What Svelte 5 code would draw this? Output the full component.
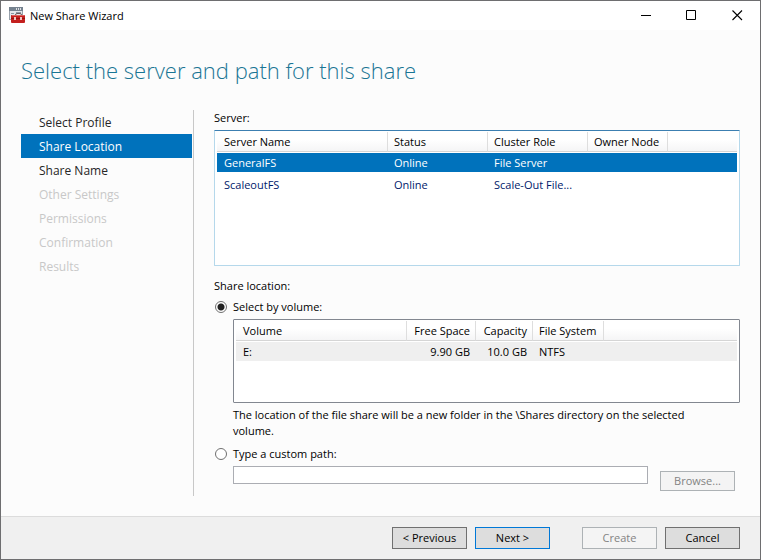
<script>
  const steps = [
    { name: 'Select Profile' },
    { name: 'Share Location', current: true },
    { name: 'Share Name' },
    { name: 'Other Settings', off: true },
    { name: 'Permissions', off: true },
    { name: 'Confirmation', off: true },
    { name: 'Results', off: true }
  ];
  const servers = [
    { name: 'GeneralFS', status: 'Online', role: 'File Server', node: '' },
    { name: 'ScaleoutFS', status: 'Online', role: 'Scale-Out File...', node: '' }
  ];
  let selected = $state('GeneralFS');
  let mode = $state('volume');
  let path = $state('');
</script>

<div class="window">
  <header class="titlebar">
    <svg class="logo" width="17" height="17" viewBox="0 0 17 17" aria-hidden="true">
      <rect x="0.500" y="0.500" width="13" height="12" fill="#e3e7eb" stroke="#97a1ab" />
      <rect x="0" y="0" width="14" height="4" fill="#75828f" />
      <path d="M7 2h1M9 2h1M11 2h1" stroke="#fff" stroke-width="1.500" />
      <path d="M2 6.500h3M2 8.500h1M7 5.500h5" stroke="#8b98a5" />
      <path d="M6.500 8.500V8q0-1.500 1.500-1.500h3q1.500 0 1.500 1.500v0.500" fill="none" stroke="#6a5a5c" />
      <rect x="2" y="8" width="14" height="8" rx="1" fill="#c4201f" />
      <path d="M3 8.500h12" stroke="#e0605c" />
      <path d="M2 11.500h14" stroke="#96120f" />
      <path d="M5 10h2v3H5zM11 10h2v3h-2z" fill="#efc4c1" />
    </svg>
    <span class="caption">New Share Wizard</span>
    <button class="sys" aria-label="Minimize"><svg width="11" height="11" viewBox="0 0 11 11"><path d="M1 5.500h10" stroke="#000" /></svg></button>
    <button class="sys" aria-label="Maximize"><svg width="11" height="11" viewBox="0 0 11 11"><path d="M0.500 0.500h9v9h-9z" fill="none" stroke="#000" /></svg></button>
    <button class="sys" aria-label="Close"><svg width="11" height="11" viewBox="0 0 11 11"><path d="M0.500 0.500l9.500 9.500M10 0.500l-9.500 9.500" stroke="#000" stroke-width="1.100" /></svg></button>
  </header>

  <h1>Select the server and path for this share</h1>

  <div class="body">
    <nav aria-label="Wizard steps">
      {#each steps as s}
        <button class="step" class:current={s.current} disabled={s.off}>{s.name}</button>
      {/each}
    </nav>

    <main>
      <div class="label">Server:</div>
      <div class="grid servers">
        <table aria-label="Server">
          <colgroup><col class="c171" /><col class="c100" /><col class="c100" /><col class="c80" /><col /></colgroup>
          <thead>
            <tr><th>Server Name</th><th>Status</th><th>Cluster Role</th><th>Owner Node</th><td class="rest"></td></tr>
          </thead>
          <tbody>
            {#each servers as s}
              <tr class:selected={selected === s.name} onclick={() => (selected = s.name)}>
                <td>{s.name}</td><td>{s.status}</td><td>{s.role}</td><td>{s.node}</td><td></td>
              </tr>
            {/each}
          </tbody>
        </table>
      </div>

      <div class="label location">Share location:</div>
      <label class="option"><input type="radio" value="volume" bind:group={mode} />Select by volume:</label>
      <div class="indent">
        <div class="grid volumes">
          <table aria-label="Volume">
            <colgroup><col class="c171" /><col class="c69" /><col class="c57" /><col class="c71" /><col /></colgroup>
            <thead>
              <tr><th>Volume</th><th class="num">Free Space</th><th class="num">Capacity</th><th>File System</th><td class="rest"></td></tr>
            </thead>
            <tbody>
              <tr class="inactive"><td>E:</td><td class="num">9.90 GB</td><td class="num">10.0 GB</td><td>NTFS</td><td></td></tr>
            </tbody>
          </table>
        </div>
        <p>The location of the file share will be a new folder in the \Shares directory on the selected volume.</p>
      </div>
      <label class="option custom"><input type="radio" value="path" bind:group={mode} />Type a custom path:</label>
      <div class="indent path">
        <input type="text" aria-label="Custom path" bind:value={path} />
        <button class="btn browse" disabled>Browse...</button>
      </div>
    </main>
  </div>

  <footer>
    <button class="btn">&lt; Previous</button>
    <button class="btn primary">Next &gt;</button>
    <button class="btn create" disabled>Create</button>
    <button class="btn">Cancel</button>
  </footer>
</div>

<style>
  .window {
    box-sizing: border-box;
    min-height: 100vh;
    display: flex;
    flex-direction: column;
    border: 1px solid #6e6e70;
    background: #fcfcfc;
    color: #000;
    font: 11px/16px "Open Sans", "Noto Sans", sans-serif;
  }
  button, input { font: inherit; color: inherit; margin: 0; }
  .titlebar {
    display: flex;
    align-items: center;
    height: 29px;
    padding-left: 8px;
    background: #fff;
  }
  .caption { flex: 1; padding-left: 4px; }
  .sys {
    display: grid;
    place-items: center;
    width: 46px;
    height: 29px;
    padding: 0;
    border: 0;
    background: none;
  }
  h1 {
    margin: 24px 20px 0;
    font-size: 22px;
    line-height: 32px;
    font-weight: 300;
    color: #1a7594;
  }
  .body {
    flex: 1;
    display: flex;
    margin: 24px 20px 20px;
  }
  nav {
    display: flex;
    flex-direction: column;
    width: 171px;
    padding-right: 1px;
    border-right: 1px solid #c8c8c8;
    font-size: 12px;
  }
  .step {
    height: 24px;
    padding: 2px 18px 0;
    border: 0;
    background: none;
    text-align: left;
    color: #262626;
  }
  .step.current { background: #0072bc; color: #fff; }
  .step:disabled { color: #c8c8c8; }
  main { flex: 1; min-width: 0; padding-left: 20px; }
  .label { line-height: 16px; }
  .label.location { margin-top: 12px; }
  .grid {
    box-sizing: border-box;
    padding: 1px 2px;
    border: 1px solid #828790;
    border-radius: 1px;
    background: #fff;
  }
  .servers {
    min-height: 136px;
    margin-top: 4px;
    border-color: #3c7fb1 #b5d8eb #b5d8eb;
    color: #001a6b;
  }
  .volumes { min-height: 84px; }
  table {
    width: 100%;
    table-layout: fixed;
    border-collapse: separate;
    border-spacing: 0;
  }
  .c171 { width: 171px; }
  .c100 { width: 100px; }
  .c80 { width: 80px; }
  .c69 { width: 69px; }
  .c57 { width: 57px; }
  .c71 { width: 71px; }
  th, td {
    box-sizing: border-box;
    padding: 0 6px;
    text-align: left;
    font-weight: 400;
    white-space: nowrap;
  }
  th:first-child, td:first-child { padding-left: 7px; }
  th {
    height: 20px;
    padding-right: 5px;
    border-right: 1px solid #dedede;
  }
  thead { color: #000; }
  thead th, .rest {
    border-bottom: 1px solid #d5d5d5;
    background: linear-gradient(#fff 40%, #f5f5f6);
  }
  .num { text-align: right; }
  tbody td {
    height: 22px;
    border: solid transparent;
    border-width: 1px 0 2px;
    background-clip: padding-box;
  }
  .selected td { background-color: #0072bc; color: #fff; }
  .inactive td { background-color: #efefef; }
  .option {
    display: flex;
    align-items: center;
    height: 16px;
    margin: 5px 0 4px;
  }
  .option.custom { margin: 7px 0 4px; }
  .option input {
    appearance: none;
    box-sizing: border-box;
    width: 12px;
    height: 12px;
    margin: 0 6px 0 1px;
    border: 1px solid #707070;
    border-radius: 50%;
    background: #fff;
  }
  .option input:checked { background: radial-gradient(circle, #222 3px, #fff 4px); }
  .indent { padding-left: 19px; }
  p { margin: 4px 24px 0 0; }
  .path { display: flex; align-items: flex-start; gap: 12px; }
  .path input {
    flex: 1;
    min-width: 0;
    box-sizing: border-box;
    height: 18px;
    padding: 0 4px;
    border: 1px solid #abadb3;
    background: #fff;
  }
  .btn {
    box-sizing: border-box;
    width: 75px;
    height: 22px;
    padding: 0;
    border: 1px solid #707070;
    background: #ddd;
    line-height: 18px;
  }
  .btn:disabled {
    border-color: #adb2b5;
    background: #f4f4f4;
    color: #838383;
  }
  .btn.primary { border-color: #0078d7; }
  .browse { height: 20px; margin: 5px 5px 0 0; }
  footer {
    display: flex;
    justify-content: flex-end;
    gap: 8px;
    padding: 10px 20px;
    border-top: 1px solid #dcdcdc;
    background: #f0f0f0;
  }
  .create { margin-left: 24px; }
</style>
